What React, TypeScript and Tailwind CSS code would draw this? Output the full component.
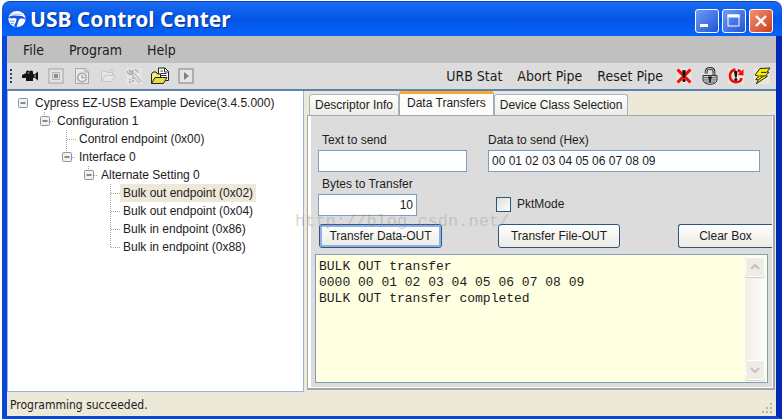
import React, { useState } from 'react';

interface TreeItem {
    label: string;
    children?: TreeItem[];
}

const deviceTree: TreeItem = {
    label: 'Cypress EZ-USB Example Device(3.4.5.000)',
    children: [
        {
            label: 'Configuration 1',
            children: [
                { label: 'Control endpoint (0x00)' },
                {
                    label: 'Interface 0',
                    children: [
                        {
                            label: 'Alternate Setting 0',
                            children: [
                                { label: 'Bulk out endpoint (0x02)' },
                                { label: 'Bulk out endpoint (0x04)' },
                                { label: 'Bulk in endpoint (0x86)' },
                                { label: 'Bulk in endpoint (0x88)' },
                            ],
                        },
                    ],
                },
            ],
        },
    ],
};

const menus = ['File', 'Program', 'Help'];
const pipeActions = ['URB Stat', 'Abort Pipe', 'Reset Pipe'];
const tabs = ['Descriptor Info', 'Data Transfers', 'Device Class Selection'];
const transferLog = 'BULK OUT transfer\n0000 00 01 02 03 04 05 06 07 08 09\nBULK OUT transfer completed';

/* ---------- icons ---------- */

const LogoIcon = () => (
    <svg width="18" height="18" viewBox="0 0 18 18" aria-hidden="true">
        <ellipse cx="9" cy="9" rx="8.6" ry="8" fill="#fff" />
        <path d="M0 7.6 Q3 5.2 7 5.6 L14 6 Q17 6.8 18 10 Q15.5 8.2 12.4 8.6 Q10.8 9.4 10 12.4 L8.6 17 L6 16 Q8.4 12 8.6 8.8 Q6.5 7.2 3.4 8.4 Z" fill="#1558dc" />
        <path d="M2.5 4.2 H14" stroke="#8fb2f2" strokeWidth=".8" />
        <path d="M2 11 L6.5 11.4 M3 13.4 L5.8 13.8" stroke="#5f92ee" strokeWidth="1" />
    </svg>
);

const CameraIcon = () => (
    <svg width="18" height="16" viewBox="0 0 18 16">
        <path d="M1 7 L4 5.5 H5 V4 Q5 2.5 6.5 2.5 Q8 2.5 8.5 3.5 Q9 2.5 10.5 2.5 Q12 2.5 12 4 V6 L14 6 L17 3.5 V12.5 L14 10 H12 V13 H5 V10 H1 Z" fill="#141414" />
        <circle cx="7.5" cy="5" r="1" fill="#777" />
        <path d="M14 6.5 V9.5" stroke="#ccc" />
    </svg>
);

const StopIcon = () => (
    <svg width="16" height="16" viewBox="0 0 16 16">
        <rect x="1" y="1" width="14" height="14" fill="#e4e4e4" stroke="#a3a3a3" />
        <rect x="4.5" y="4.5" width="7" height="7" fill="#ddd" stroke="#b4b4b4" />
        <rect x="6" y="6" width="4" height="4" fill="#8d8d8d" />
    </svg>
);

const ClockIcon = () => (
    <svg width="16" height="16" viewBox="0 0 16 16" fill="none" stroke="#a6a6a6">
        <path d="M1.5 .5 H11 L14.5 4 V15.5 H1.5 Z" fill="#e6e6e6" />
        <path d="M11 .5 V4 H14.5" />
        <circle cx="8" cy="9.5" r="4.2" fill="#efefef" strokeWidth="1.5" />
        <path d="M8 7 V9.8 H10.5" stroke="#888" />
    </svg>
);

const FolderIcon = () => (
    <svg width="16" height="16" viewBox="0 0 16 16" fill="#e6e6e6" stroke="#c6c6c6">
        <path d="M1.5 13.5 V4.5 L3 3 H6 L7.5 4.5 H12.5 V7" />
        <path d="M1.5 13.5 L5 7.5 H15 L11.5 13.5 Z" />
        <path d="M9 2.5 Q12 .5 14 3.5" fill="none" />
    </svg>
);

const ToolsIcon = () => (
    <svg width="16" height="16" viewBox="0 0 16 16" fill="none" stroke="#a6a6a6">
        <rect width="16" height="16" fill="#e4e4e4" stroke="none" />
        <path d="M6.5 5.5 L14 14" strokeWidth="3.4" />
        <path d="M7 6 L13.5 13.5" stroke="#f2f2f2" strokeWidth="1.4" />
        <path d="M1.5 3 Q1.5 6.5 5 6.5 Q7.5 5.5 6.5 2.5 L4.5 4.5 L3 1.5" strokeWidth="1.2" />
        <path d="M8.5 1.5 Q11.5 1.5 12 4.5" strokeWidth="1.2" />
        <path d="M4 15 V11 M7 14 V9.5" strokeWidth="1.6" strokeDasharray="2 1" />
    </svg>
);

const OpenDocIcon = () => (
    <svg width="20" height="18" viewBox="0 0 20 18">
        <path d="M8.5 1 H15 L18.5 4.5 V13.5 H8.5 Z" fill="#fff" stroke="#222" />
        <path d="M14.5 1 V5 H18.5 M10.5 4 H13 M10.5 6.5 H16.5 M10.5 8.5 H16.5" stroke="#333" fill="none" />
        <path d="M1.5 16.5 V7 L3 5 H6 L7.5 7 H10.5 V10" fill="#f5ef7b" stroke="#222" />
        <path d="M1.5 16.5 L5 10.5 H17 L13.5 16.5 Z" fill="#e6dc3c" stroke="#222" />
    </svg>
);

const PlayIcon = () => (
    <svg width="16" height="16" viewBox="0 0 16 16">
        <rect x="1" y="1" width="14" height="14" fill="#e4e4e4" stroke="#9b9b9b" strokeWidth="1.4" />
        <path d="M6 4 L11 8 L6 12 Z" fill="#808080" />
    </svg>
);

const AbortIcon = () => (
    <svg width="16" height="16" viewBox="0 0 16 16">
        <rect width="16" height="16" fill="#e6e2d8" />
        <path d="M1.5 1.5 L14.5 14.5 M14.5 1.5 L1.5 14.5" stroke="#f00a0a" strokeWidth="3" />
        <path d="M6.2 2.6 Q8 1.2 9.8 2.6 L8.9 10 H7.1 Z" fill="#111" />
        <circle cx="8" cy="12.4" r="1.6" fill="#111" />
    </svg>
);

const LockIcon = () => (
    <svg width="16" height="18" viewBox="0 0 16 18">
        <path d="M4.2 6.5 V4 Q4.6 1.4 8 1.4 Q11.8 1.4 12 4.5 V9" fill="none" stroke="#2a2a2a" strokeWidth="2.8" />
        <path d="M4.2 6.5 V4 Q4.6 1.4 8 1.4 Q11.8 1.4 12 4.5 V9" fill="none" stroke="#c4c4c4" strokeWidth="1" />
        <path d="M1 8.5 H15 V13 Q14 17.3 8 17.3 Q2 17.3 1 13 Z" fill="#cfcfcf" stroke="#333" />
        <path d="M1.5 10.7 H14.5 M1.5 12.9 H14.5 M3 15.1 H13" stroke="#555" strokeWidth=".9" />
        <path d="M6.2 9.6 H9.8 V11.6 H8.8 V15.4 H7.2 V11.6 H6.2 Z" fill="#111" />
    </svg>
);

const ResetIcon = () => (
    <svg width="16" height="16" viewBox="0 0 16 16">
        <rect width="16" height="16" fill="#ebe5da" />
        <path d="M7.5 1.6 Q2 2.4 2 8 Q2 13.6 8 14.2 Q12.6 14.2 13.6 10" fill="none" stroke="#f00a0a" strokeWidth="2.6" />
        <path d="M9.6 2 Q11.6 2.6 12.6 4.4" fill="none" stroke="#f00a0a" strokeWidth="2.4" />
        <path d="M15.5 1 L15.5 7.4 L9.6 7 Z" fill="#f00a0a" />
        <path d="M6 3.4 Q7.8 2.2 9.4 3.4 L8.7 9.4 H7 Z" fill="#111" />
        <circle cx="7.8" cy="11.4" r="1.5" fill="#111" />
    </svg>
);

const BoltIcon = () => (
    <svg width="18" height="18" viewBox="0 0 18 18">
        <rect x="1" y="1" width="16" height="16" fill="#ebe7da" />
        <path d="M7 1.5 L17 1 L14 5 L16 5.2 L12.6 8.8 L14.4 9.2 L3.2 16.8 L5.4 12.8 L2.6 12.6 L6 9.4 L2 8 Z" fill="#f9f000" stroke="#222" strokeLinejoin="round" />
        <path d="M8 5.4 H13.6 M6.5 9 H12.4 M5.6 12.7 L9.8 9.6" stroke="#222" fill="none" />
    </svg>
);

const leftTools = [
    { name: 'Capture', icon: <CameraIcon />, disabled: false },
    { name: 'Stop', icon: <StopIcon />, disabled: true },
    { name: 'Delay', icon: <ClockIcon />, disabled: true },
    { name: 'Open script', icon: <FolderIcon />, disabled: true },
    { name: 'Tools', icon: <ToolsIcon />, disabled: true },
    { name: 'Load file', icon: <OpenDocIcon />, disabled: false },
    { name: 'Play', icon: <PlayIcon />, disabled: true },
];

const rightTools = [
    { name: 'Abort', icon: <AbortIcon /> },
    { name: 'Unlock', icon: <LockIcon /> },
    { name: 'Reset', icon: <ResetIcon /> },
    { name: 'Reconnect', icon: <BoltIcon /> },
];

/* ---------- tree ---------- */

const ExpanderIcon: React.FC<{ open: boolean, root: boolean }> = ({ open, root }) => (
    <svg width="18" height="18" viewBox="0 0 18 18">
        {!root && <path d="M8.5 0 V4 M14 9.5 H18" stroke="#a9a79c" strokeDasharray="1 1" />}
        <rect x="4.5" y="4.5" width="9" height="9" rx="1" fill="#f3f1ea" stroke="#7b97b5" />
        <path d="M6.5 9 H11.5" stroke="#222" />
        {!open && <path d="M9 6.5 V11.5" stroke="#222" />}
    </svg>
);

const LeafIcon: React.FC<{ last: boolean }> = ({ last }) => (
    <svg width="18" height="18" viewBox="0 0 18 18">
        <path d={last ? 'M8.5 0 V9' : 'M8.5 0 V18'} stroke="#a9a79c" strokeDasharray="1 1" />
        <path d="M9 9.5 H18" stroke="#a9a79c" strokeDasharray="1 1" />
    </svg>
);

const TreeNode: React.FC<{
    item: TreeItem,
    root?: boolean,
    last: boolean,
    selected: string,
    onSelect: (label: string) => void
}> = ({ item, root = false, last, selected, onSelect }) => {
    const [open, setOpen] = useState(true);

    return (
        <li>
            <div className="flex h-[18px] items-center">
                {item.children ? (
                    <button aria-label={`Toggle ${item.label}`} onClick={() => setOpen(!open)}>
                        <ExpanderIcon open={open} root={root} />
                    </button>
                ) : (
                    <LeafIcon last={last} />
                )}
                <button
                    onClick={() => onSelect(item.label)}
                    className={`h-[18px] whitespace-nowrap px-[3px] ${selected === item.label ? 'bg-[#ece9d8]' : ''}`}
                >
                    {item.label}
                </button>
            </div>
            {item.children && open && (
                <ul className="pl-[22px]">
                    {item.children.map((child, i) => (
                        <TreeNode
                            key={child.label}
                            item={child}
                            last={i === item.children!.length - 1}
                            selected={selected}
                            onSelect={onSelect}
                        />
                    ))}
                </ul>
            )}
        </li>
    );
};

/* ---------- window parts ---------- */

const TitleBar = () => (
    <header className="flex h-[35px] items-center rounded-t-lg border-t border-[#0a3fc4] bg-linear-to-b from-[#1a6cf2] via-[#0355e6] to-[#0564fb] pr-[9px] pl-1.5">
        <LogoIcon />
        <h1 className="flex-1 pl-1 font-['Noto_Sans','Open_Sans',sans-serif] text-[21px] font-bold text-white [text-shadow:1px_1px_1px_#0a2f8c]">
            USB Control Center
        </h1>
        <div className="flex gap-[3px] pt-1">
            <button aria-label="Minimize" className="size-6 rounded-[3px] border border-white bg-linear-to-br from-[#6f9bf5] to-[#2253d6]">
                <svg width="22" height="22" viewBox="0 0 22 22"><path d="M4 15.5 H12" stroke="#fff" strokeWidth="3" /></svg>
            </button>
            <button aria-label="Maximize" className="size-6 rounded-[3px] border border-white bg-linear-to-br from-[#6f9bf5] to-[#2253d6]">
                <svg width="22" height="22" viewBox="0 0 22 22" fill="none" stroke="#fff">
                    <rect x="5" y="5" width="11" height="11" />
                    <path d="M4.5 6 H16.5" strokeWidth="3" />
                </svg>
            </button>
            <button aria-label="Close" className="size-6 rounded-[3px] border border-white bg-linear-to-br from-[#ee9072] to-[#cf3a12]">
                <svg width="22" height="22" viewBox="0 0 22 22"><path d="M6 6 L16 16 M16 6 L6 16" stroke="#fff" strokeWidth="2.4" /></svg>
            </button>
        </div>
    </header>
);

const Toolbar = () => (
    <div className="flex h-7 items-center border-b-2 border-[#5f82b5] bg-[#dcdcdc] pr-px pl-[3px]">
        <svg width="4" height="16" viewBox="0 0 4 16" aria-hidden="true">
            <path d="M1 1 V16" stroke="#27408b" strokeWidth="2" strokeDasharray="2 2" />
        </svg>
        <div className="flex pl-[3px]">
            {leftTools.map(tool => (
                <button key={tool.name} aria-label={tool.name} disabled={tool.disabled} className="flex h-6 w-[26px] items-center justify-center">
                    {tool.icon}
                </button>
            ))}
        </div>
        <div className="ml-auto flex gap-[15px] pr-2">
            {pipeActions.map(action => (
                <button key={action} className="whitespace-nowrap">{action}</button>
            ))}
        </div>
        <div className="flex">
            {rightTools.map(tool => (
                <button key={tool.name} aria-label={tool.name} className="flex h-6 w-[26px] items-center justify-center">
                    {tool.icon}
                </button>
            ))}
        </div>
    </div>
);

const TransferPanel = () => {
    const [text, setText] = useState('');
    const [hex, setHex] = useState('00 01 02 03 04 05 06 07 08 09');
    const [bytes, setBytes] = useState('10');
    const [pktMode, setPktMode] = useState(false);
    const [log, setLog] = useState(transferLog);

    const inputStyle = 'h-[22px] border border-[#7f9db9] bg-white px-[3px] outline-none';
    const buttonStyle = 'h-6 border border-[#2b5680] bg-linear-to-b from-white to-[#eceae2] whitespace-nowrap';

    return (
        <div className="flex flex-1 flex-col border border-r-2 border-b-2 border-[#a2a9ad] bg-[#dcdcdc]">
            <div className="flex flex-1 flex-col border-r border-b border-l-3 border-white pt-4 pl-1">
                <div className="grid grid-cols-[149px_1fr] gap-x-[21px] gap-y-1 pr-3 pl-[3px]">
                    <div className="flex flex-col">
                        <label htmlFor="text" className="h-[18px] pl-1 leading-4">Text to send</label>
                        <input id="text" value={text} onChange={e => setText(e.target.value)} className={inputStyle} />
                    </div>
                    <div className="flex flex-col">
                        <label htmlFor="hex" className="h-[18px] leading-4">Data to send (Hex)</label>
                        <input id="hex" value={hex} onChange={e => setHex(e.target.value)} className={inputStyle} />
                    </div>
                    <div className="flex flex-col">
                        <label htmlFor="bytes" className="h-[18px] pl-1 leading-4">Bytes to Transfer</label>
                        <input id="bytes" value={bytes} onChange={e => setBytes(e.target.value)} className={`${inputStyle} w-[99px] text-right`} />
                    </div>
                    <label className="flex items-center gap-1.5 self-end pb-1 pl-2">
                        <input
                            type="checkbox"
                            checked={pktMode}
                            onChange={e => setPktMode(e.target.checked)}
                            className="size-[15px] appearance-none border border-[#2b5680] bg-linear-to-br from-[#dcdcd7] to-white checked:bg-[#21a121]"
                        />
                        PktMode
                    </label>
                </div>
                <div className="flex pt-2 pl-1">
                    <button className={`${buttonStyle} w-[123px] rounded-[3px] shadow-[inset_0_0_0_2px_#8fb0ee]`}>Transfer Data-OUT</button>
                    <button className={`${buttonStyle} ml-14 w-[122px] rounded-[3px]`}>Transfer File-OUT</button>
                    <button className={`${buttonStyle} ml-auto w-[94px] rounded-l-[3px] border-r-0`} onClick={() => setLog('')}>Clear Box</button>
                </div>
                <div className="mt-1.5 mr-1 mb-1 flex flex-1 border border-[#7f9db9] bg-[#ffffe1] p-0.5">
                    <textarea
                        aria-label="Transfer log"
                        readOnly
                        value={log}
                        className="flex-1 resize-none overflow-hidden pt-0.5 pl-px font-['Liberation_Mono',monospace] text-[13px] leading-4 outline-none"
                    />
                    <div className="flex w-5 flex-col justify-between bg-linear-to-r from-[#f1efe9] to-[#fdfdfa]">
                        <button aria-label="Scroll up" className="flex h-5 items-center justify-center rounded-[3px] border border-white bg-[#edece5] shadow-[0_1px_1px_#cfcdc2]">
                            <svg width="12" height="12" viewBox="0 0 12 12" fill="none" stroke="#c6c4ba" strokeWidth="2.2"><path d="M2 8 L6 4 L10 8" /></svg>
                        </button>
                        <button aria-label="Scroll down" className="flex h-5 items-center justify-center rounded-[3px] border border-white bg-[#edece5] shadow-[0_1px_1px_#cfcdc2]">
                            <svg width="12" height="12" viewBox="0 0 12 12" fill="none" stroke="#c6c4ba" strokeWidth="2.2"><path d="M2 4 L6 8 L10 4" /></svg>
                        </button>
                    </div>
                </div>
            </div>
        </div>
    );
};

const App = () => {
    const [selected, setSelected] = useState('Bulk out endpoint (0x02)');
    const [activeTab, setActiveTab] = useState('Data Transfers');

    return (
        <div className="relative flex min-h-screen flex-col bg-white pt-px pb-px pl-0.5 font-['Liberation_Sans',Arial,sans-serif] text-xs text-[#1c1c1c]">
            <TitleBar />
            <div className="flex flex-1 flex-col border-r-6 border-b-3 border-l-5 border-[#0a45dc] border-r-[#0428b4]">
                <div className="flex flex-1 flex-col bg-[#ece9d8]">
                    <div className="font-['DejaVu_Sans_Condensed','DejaVu_Sans',sans-serif] text-sm">
                        <nav className="flex h-[27px] items-center gap-[25px] bg-[#c0c0c0] pl-4">
                            {menus.map(menu => (
                                <button key={menu}>{menu}</button>
                            ))}
                        </nav>
                        <Toolbar />
                    </div>

                    <main className="flex flex-1">
                        <ul className="w-[297px] border border-t-0 border-[#9ab3cf] bg-white pt-[3px] pl-1.5">
                            <TreeNode item={deviceTree} root last selected={selected} onSelect={setSelected} />
                        </ul>
                        <section className="flex flex-1 flex-col pr-px pb-0.5 pl-[3px]">
                            <div role="tablist" className="flex h-6 items-end pl-0.5">
                                {tabs.map(tab => (
                                    <button
                                        key={tab}
                                        role="tab"
                                        aria-selected={activeTab === tab}
                                        onClick={() => setActiveTab(tab)}
                                        className={`rounded-t-[3px] border-x whitespace-nowrap ${activeTab === tab
                                            ? 'h-6 border-t-3 border-x-[#a2a9ad] border-t-[#f7ab2e] bg-[#fcfcfb] px-[7px] pb-1'
                                            : 'h-[21px] border-t border-[#a2b5c5] bg-linear-to-b from-white to-[#ecebe4] px-[5px]'}`}
                                    >
                                        {tab}
                                    </button>
                                ))}
                            </div>
                            <TransferPanel />
                        </section>
                    </main>

                    <footer className="flex h-6 items-center justify-between pt-0.5 pl-[3px] font-['DejaVu_Sans_Condensed','DejaVu_Sans',sans-serif]">
                        <span>Programming succeeded.</span>
                        <svg width="14" height="14" viewBox="0 0 14 14" fill="#b5b2a2" className="mr-0.5 self-end" aria-hidden="true">
                            <path d="M10 1 h2 v2 h-2 Z M10 5 h2 v2 h-2 Z M6 5 h2 v2 h-2 Z M10 9 h2 v2 h-2 Z M6 9 h2 v2 h-2 Z M2 9 h2 v2 h-2 Z" />
                        </svg>
                    </footer>
                </div>
            </div>
            <div className="pointer-events-none absolute top-[210px] left-[295px] font-['Liberation_Mono',monospace] text-[17px] leading-6 text-[#8c8c7c]/35">
                http://blog.csdn.net/
            </div>
        </div>
    );
};

export default App;
